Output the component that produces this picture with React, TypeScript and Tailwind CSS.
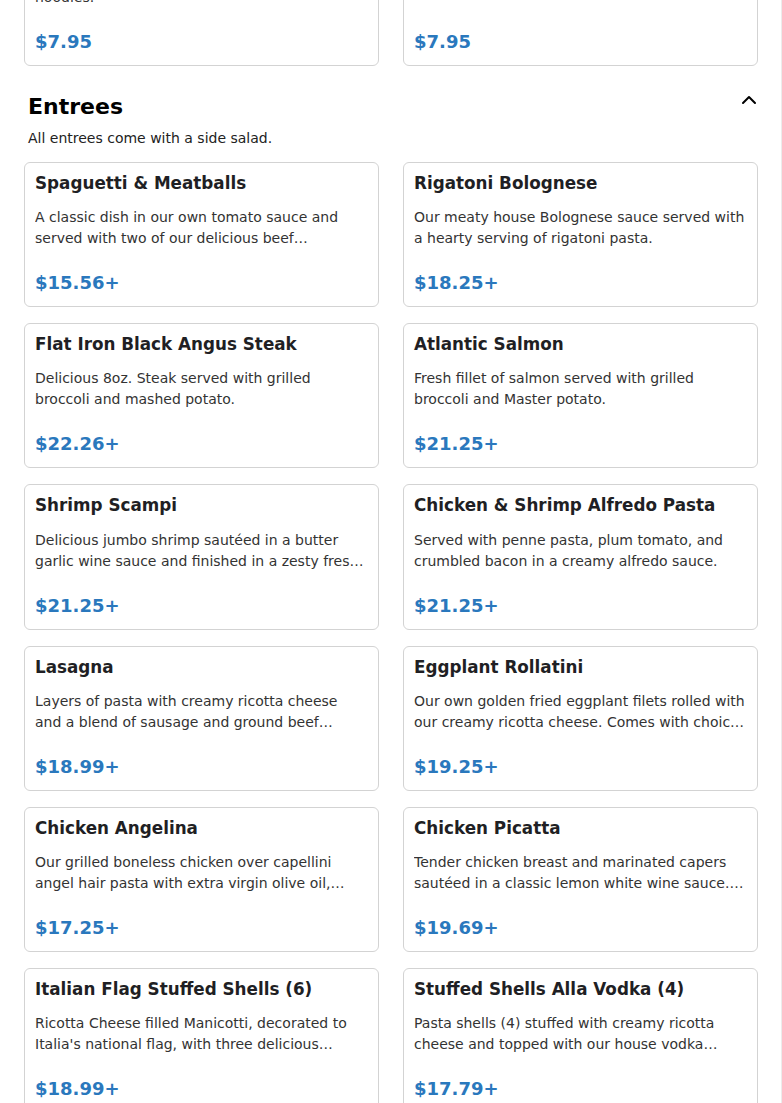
import { ChevronUp } from 'lucide-react';

type MenuItem = {
  name: string;
  description: string;
  price: string;
};

const soups: MenuItem[] = [
  {
    name: 'Chicken Noodle Soup',
    description: 'Homemade chicken broth with carrots and egg noodles.',
    price: '$7.95',
  },
  {
    name: 'Minestrone',
    description: 'Hearty vegetable soup with beans.',
    price: '$7.95',
  },
];

const entrees: MenuItem[] = [
  {
    name: 'Spaguetti & Meatballs',
    description:
      'A classic dish in our own tomato sauce and served with two of our delicious beef meatballs.',
    price: '$15.56+',
  },
  {
    name: 'Rigatoni Bolognese',
    description: 'Our meaty house Bolognese sauce served with a hearty serving of rigatoni pasta.',
    price: '$18.25+',
  },
  {
    name: 'Flat Iron Black Angus Steak',
    description: 'Delicious 8oz. Steak served with grilled broccoli and mashed potato.',
    price: '$22.26+',
  },
  {
    name: 'Atlantic Salmon',
    description: 'Fresh fillet of salmon served with grilled broccoli and Master potato.',
    price: '$21.25+',
  },
  {
    name: 'Shrimp Scampi',
    description:
      'Delicious jumbo shrimp sautéed in a butter garlic wine sauce and finished in a zesty fresh lemon sauce over linguine.',
    price: '$21.25+',
  },
  {
    name: 'Chicken & Shrimp Alfredo Pasta',
    description: 'Served with penne pasta, plum tomato, and crumbled bacon in a creamy alfredo sauce.',
    price: '$21.25+',
  },
  {
    name: 'Lasagna',
    description:
      'Layers of pasta with creamy ricotta cheese and a blend of sausage and ground beef layered with our tomato sauce and mozzarella.',
    price: '$18.99+',
  },
  {
    name: 'Eggplant Rollatini',
    description:
      'Our own golden fried eggplant filets rolled with our creamy ricotta cheese. Comes with choice of pasta.',
    price: '$19.25+',
  },
  {
    name: 'Chicken Angelina',
    description:
      'Our grilled boneless chicken over capellini angel hair pasta with extra virgin olive oil, garlic and fresh tomatoes.',
    price: '$17.25+',
  },
  {
    name: 'Chicken Picatta',
    description:
      'Tender chicken breast and marinated capers sautéed in a classic lemon white wine sauce. Served over linguine.',
    price: '$19.69+',
  },
  {
    name: 'Italian Flag Stuffed Shells (6)',
    description:
      "Ricotta Cheese filled Manicotti, decorated to Italia's national flag, with three delicious sauces: pesto, alfredo and marinara.",
    price: '$18.99+',
  },
  {
    name: 'Stuffed Shells Alla Vodka (4)',
    description:
      'Pasta shells (4) stuffed with creamy ricotta cheese and topped with our house vodka sauce and melted mozzarella.',
    price: '$17.79+',
  },
];

function MenuCard({ item }: { item: MenuItem }) {
  return (
    <div className="flex flex-col rounded-md border border-[#d3d3d3] bg-white p-2.5">
      <h3 className="text-[1.05rem] font-bold leading-[1.2] text-[#1f1f24]">{item.name}</h3>
      <p className="mt-3.5 line-clamp-2 text-sm leading-[21px] text-[#333]">{item.description}</p>
      <div className="mt-auto pt-5 text-lg font-bold leading-[27px] text-[#2a78bd]">{item.price}</div>
    </div>
  );
}

function MenuGrid({ items }: { items: MenuItem[] }) {
  return (
    <div className="grid grid-cols-2 gap-x-6 gap-y-4">
      {items.map((item) => (
        <MenuCard key={item.name} item={item} />
      ))}
    </div>
  );
}

export default function App() {
  return (
    <div className="h-[1103px] overflow-hidden bg-white font-['DejaVu_Sans',sans-serif] shadow-[inset_-1px_0_0_#ececec]">
      <div className="-mt-[79px] px-6">
        {/* tail of the soups section, scrolled past */}
        <MenuGrid items={soups} />

        <section className="mt-[22px]">
          <div className="flex items-start justify-between">
            <h2 className="mt-[5px] pl-1 text-[22px] font-bold leading-7 text-black">Entrees</h2>
            <button type="button" className="-mr-[3px] text-black">
              <ChevronUp size={24} strokeWidth={2} />
            </button>
          </div>
          <p className="mt-[7px] pl-1 text-sm leading-[21px] text-[#222]">
            All entrees come with a side salad.
          </p>
          <div className="mt-[13px]">
            <MenuGrid items={entrees} />
          </div>
        </section>
      </div>
    </div>
  );
}
